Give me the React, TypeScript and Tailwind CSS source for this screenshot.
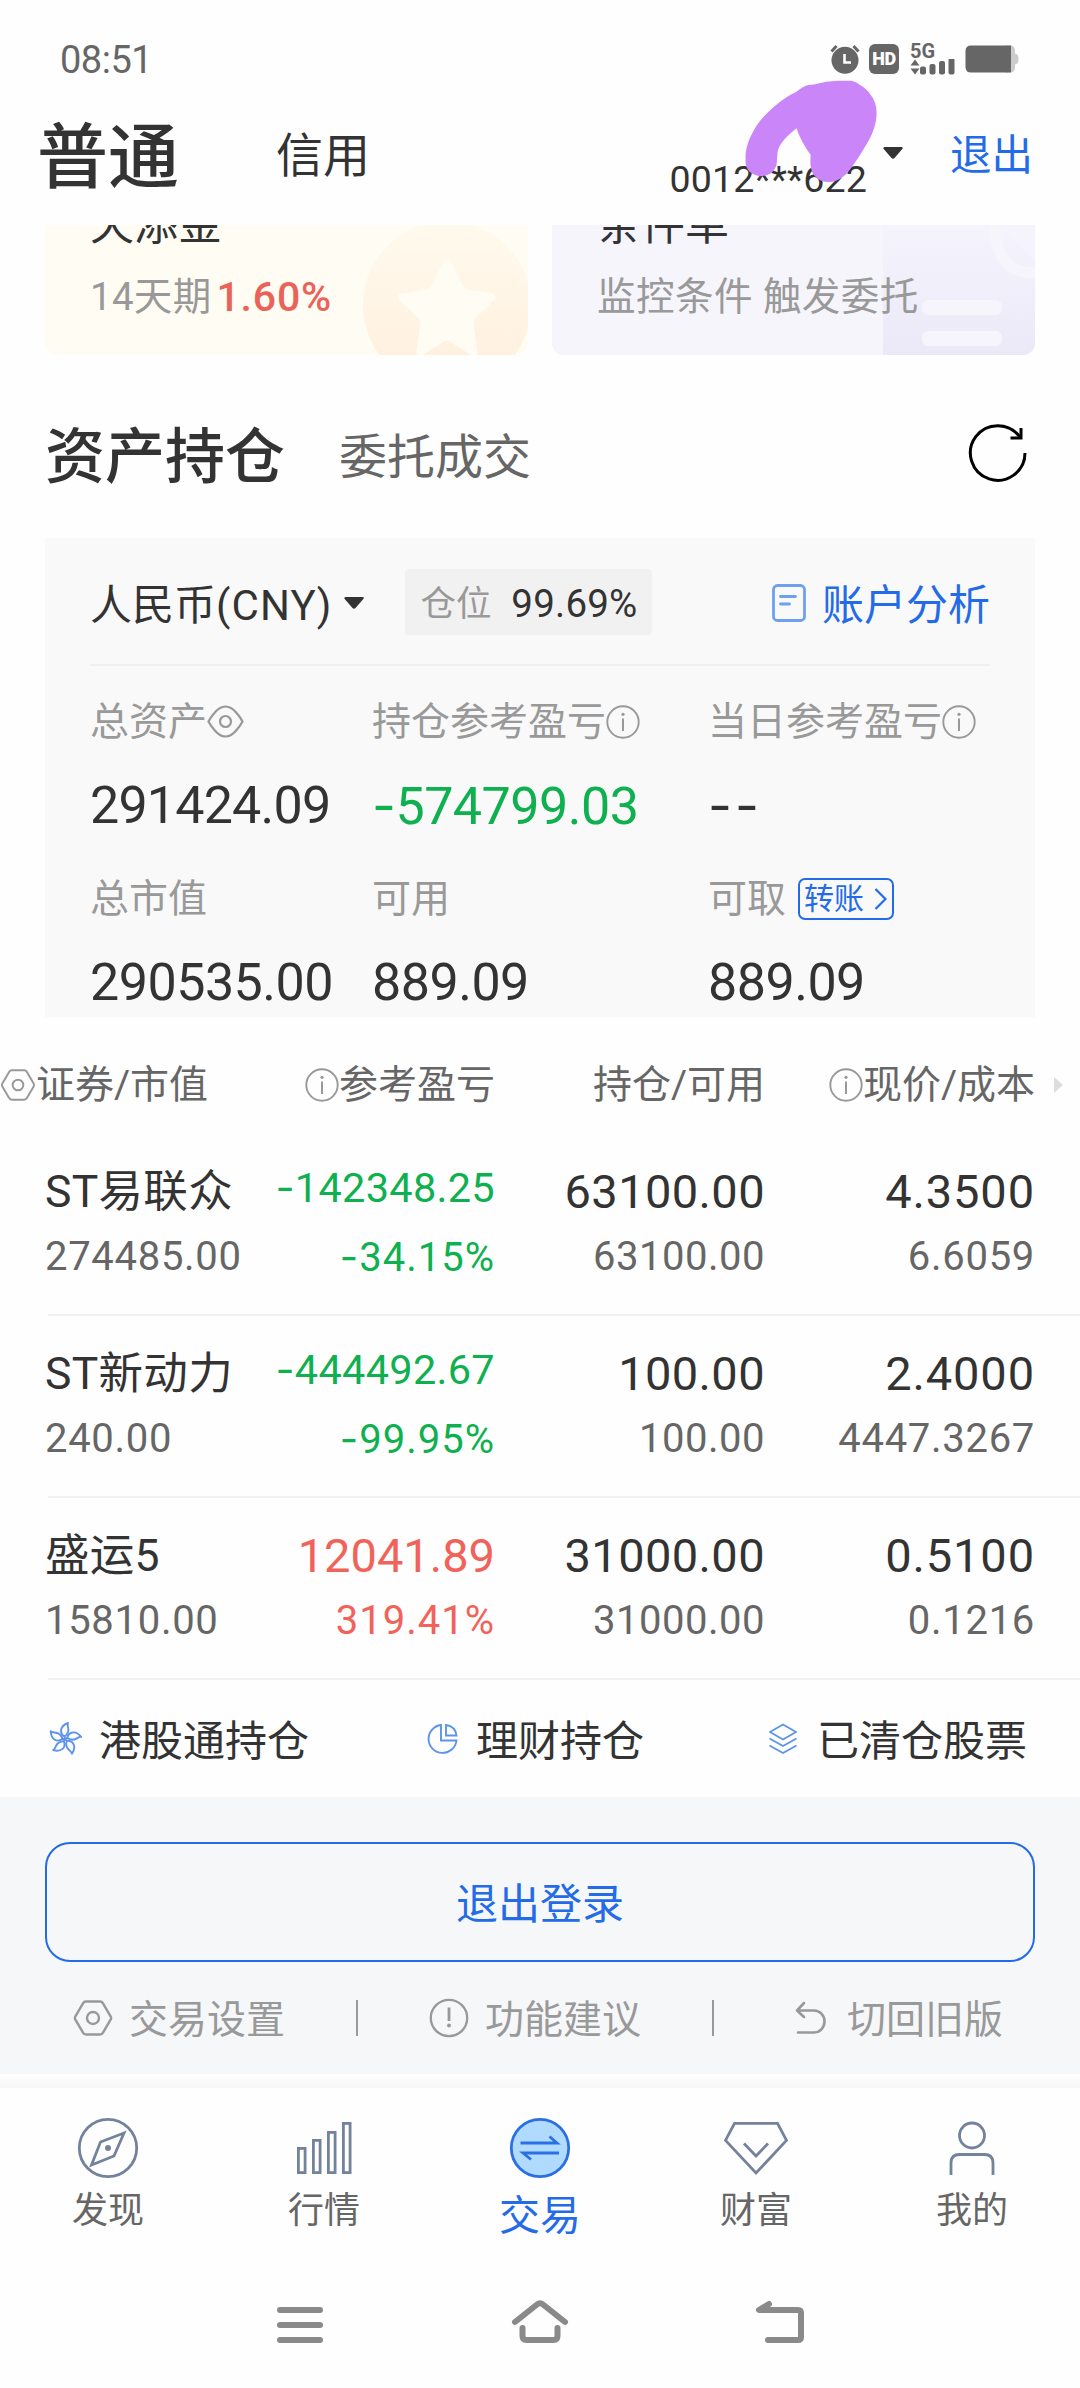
import type { ReactNode } from "react";

function Caret({ className = "" }: { className?: string }) {
  return (
    <svg className={className} width="20" height="12" viewBox="0 0 20 12">
      <path d="M1.500 0h17q2 .4.8 2L11.500 11q-1.500 1.300-3 0L.7 2Q-.3.5 1.500 0z" fill="#333" />
    </svg>
  );
}

function Info() {
  return (
    <svg className="shrink-0" width="34" height="34" viewBox="0 0 34 34" fill="none" stroke="#999">
      <circle cx="17" cy="17" r="15.700" strokeWidth="1.900" />
      <path d="M17 13.500V26" strokeWidth="2" />
      <circle cx="17" cy="9.300" r="1.600" fill="#999" stroke="none" />
    </svg>
  );
}

function Hex({ w, h, s }: { w: number; h: number; s: number }) {
  return (
    <svg className="shrink-0" width={w} height={h} viewBox="0 0 40 36" fill="none" stroke="#999" strokeWidth={s}>
      <path d="M13 1.500h14q2 0 3 1.800l7.600 13q1 1.700 0 3.400l-7.600 13q-1 1.800-3 1.800H13q-2 0-3-1.800l-7.600-13q-1-1.700 0-3.400l7.600-13q1-1.800 3-1.800z" />
      <circle cx="20" cy="18" r="6" />
    </svg>
  );
}

// Leading minus signs use Inter, whose hyphen is wide and sits at digit centre.
function Num({ text }: { text: string }) {
  const digits = text.replace(/^-+/, "");
  const sign = text.slice(0, text.length - digits.length);
  return (
    <>
      {sign && <span className="font-['Inter']">{sign}</span>}
      {digits}
    </>
  );
}

function StatusBar() {
  return (
    <div className="flex h-[118px] items-center justify-between pl-[60px] pr-[61px] text-[#666]">
      <span className="mt-[2px] text-[38px] leading-[38px] tracking-[-0.500px]">08:51</span>
      <div className="flex items-center">
        <svg width="30" height="30" viewBox="0 0 30 30">
          <circle cx="15" cy="16.300" r="13.500" fill="#666" />
          <path d="M1.500 7.500 6.500 2M28.500 7.500 23.500 2" stroke="#666" strokeWidth="3" />
          <path d="M14.500 10v8.500H21" stroke="#fff" strokeWidth="2.600" fill="none" />
        </svg>
        <div className="ml-[9px] flex h-[30px] w-[30px] items-center justify-center rounded-[6px] bg-[#666] text-[18px] font-black leading-none tracking-[-0.500px] text-white">HD</div>
        <div className="ml-[11px] flex h-[31px] w-[46px] flex-col">
          <span className="text-[20px] font-bold leading-[15px]">5G</span>
          <svg width="46" height="16" viewBox="0 0 46 16" fill="#666">
            <path d="M.5 6.500 5 .5l4.500 6zM.5 9.500h9L5 15.500z" />
            <rect x="10" y="7.500" width="6" height="8" rx="2" />
            <rect x="19.500" y="5" width="6" height="10.500" rx="2" />
            <rect x="29" y="2" width="6" height="13.500" rx="2" />
            <rect x="38.500" y="-1" width="6" height="16.500" rx="2" />
          </svg>
        </div>
        <svg className="ml-[9px]" width="54" height="28" viewBox="0 0 54 28">
          <path d="M40 .5h5q5 0 5 5v3q3.500.5 3.500 5.500T50 19.500v3q0 5-5 5h-5z" fill="#ccc" />
          <path d="M6 .5h40v27H6q-5.500 0-5.500-5.500V6Q.5.5 6 .5z" fill="#666" />
        </svg>
      </div>
    </div>
  );
}

function Header() {
  return (
    <div className="mb-[33px] flex h-[74px] pl-[37px] pr-[47px] text-[#333]">
      <span className="mt-[5px] text-[71px] font-medium leading-[70px]">普通</span>
      <span className="ml-[97px] mt-[15px] text-[47px] leading-[46px]">信用</span>
      <div className="relative ml-auto flex h-full items-end">
        <span className="text-[37.500px] leading-[25px] tracking-[0.150px]">0012***622</span>
        <svg className="absolute left-[70px] top-[-42px]" width="140" height="110" viewBox="740 76 140 110">
          <path
            d="M745.600 160C745 150 748 139 757 125Q764 115 774 106.700 785 97 796.500 91.700 803 86 808.600 85 L814 84.500 Q826 81 838 80.700 H851.600 Q857 82 860 85 867 89 870 94 877 102 876.600 115 876 127 869 140 861 154 854 164 848 173 843 176.700 836 182 829.300 182 820 182 815.500 176.700 809 171 810.700 155 801 142 796.500 128.300 778 143 777.500 153 L776.600 165Q774 171 770.700 173.300 765 177 758.700 176 751 174 748 170 745 166 745.600 160z"
            fill="#ca86f9"
          />
        </svg>
      </div>
      <Caret className="ml-[16px] mt-[29px]" />
      <span className="ml-[47px] mt-[17px] text-[41.500px] leading-[42px] text-[#246be8]">退出</span>
    </div>
  );
}

function PromoCards() {
  return (
    <div className="flex h-[130px] justify-between px-[45px]">
      <div className="relative h-full w-[483px] overflow-hidden rounded-b-[12px] bg-[#fffcf4] pl-[45px]">
        <svg className="absolute right-0 top-0" width="168" height="130" viewBox="0 0 168 130">
          <defs>
            <linearGradient id="coin" x1="0" y1="0" x2="0" y2="1">
              <stop offset="0" stopColor="#fffaee" />
              <stop offset=".8" stopColor="#fff1e0" />
            </linearGradient>
          </defs>
          <circle cx="87" cy="80" r="84" fill="url(#coin)" />
          <path d="M83 37q4-6 8 0l12 24q2 3 5 3.500l24 4q6 2 2 7l-19 18q-2 3-1.500 6l4 27q0 6-6 4L89 116q-2-1-4 0l-23 14.500q-6 1-5.500-5l3.500-26q.5-4-1.500-6L39.500 75.500q-4-5 2-7l24-4q3-.5 5-3.500z" fill="#fffcf4" />
        </svg>
        <div className="relative mt-[-22px] text-[44px] leading-[44px] text-[#333]">天添金</div>
        <div className="relative mt-[30px] flex items-center leading-[40px]">
          <span className="text-[38.500px] tracking-[0.300px] text-[#999]">14天期</span>
          <span className="ml-[5px] text-[41px] font-medium tracking-[0.800px] text-[#ea6359]">1.60%</span>
        </div>
      </div>
      <div className="relative h-full w-[483px] overflow-hidden rounded-b-[12px] bg-[#f6f5fc] pl-[45px]">
        <svg className="absolute right-0 top-0" width="152" height="130" viewBox="0 0 152 130">
          <defs>
            <linearGradient id="doc" x1="0" y1="0" x2="0" y2="1">
              <stop offset="0" stopColor="#f5f4fc" />
              <stop offset="1" stopColor="#ebe9f8" />
            </linearGradient>
          </defs>
          <rect width="152" height="130" fill="url(#doc)" />
          <path d="M112 0q0 48 40 48" fill="none" stroke="#f6f5fc" strokeWidth="11" />
          <path d="M120 0q16 22 32 34V0z" fill="#f5f4fc" />
          <rect x="39" y="75" width="80" height="15" rx="6" fill="#f6f5fc" />
          <rect x="39" y="106" width="80" height="15" rx="6" fill="#f6f5fc" />
        </svg>
        <div className="relative mt-[-22px] text-[44px] leading-[44px] text-[#333]">条件单</div>
        <div className="relative mt-[30px] text-[38.600px] leading-[40px] tracking-[0.400px] text-[#999]">监控条件&nbsp;触发委托</div>
      </div>
    </div>
  );
}

function SectionTabs() {
  return (
    <div className="flex h-[183px] items-center pl-[45px] pr-[52px] pt-[22px]">
      <span className="text-[60px] font-medium leading-[60px] text-[#333]">资产持仓</span>
      <span className="ml-[54px] text-[48px] leading-[60px] text-[#666]">委托成交</span>
      <svg className="mb-[9px] ml-auto" width="60" height="60" viewBox="0 0 60 60" fill="none" stroke="#000" strokeWidth="3">
        <path d="M57 30A27.300 27.300 0 1 1 52 14.200" />
        <path d="M53 5v10H42.500" />
      </svg>
    </div>
  );
}

function Metric({ label, children, value, cls }: { label: string; children?: ReactNode; value: string; cls?: string }) {
  return (
    <div>
      <div className="flex h-[40px] items-center whitespace-nowrap text-[39px] leading-[40px] text-[#999]">
        {label}
        {children}
      </div>
      <div className={"mt-[38px] h-[52px] text-[52px] leading-[52px] " + (cls ?? "tracking-[-0.500px] text-[#333]")}>
        <Num text={value} />
      </div>
    </div>
  );
}

function AssetCard() {
  return (
    <div className="mx-[45px] h-[479px] bg-[#f9f9f9] px-[45px]">
      <div className="flex h-[128px] items-center border-b-2 border-[#f0f0f0] pt-[8px]">
        <span className="mt-[2px] text-[42px] leading-[42px] text-[#333]">
          人民币<span className="tracking-[1.100px]">(CNY)</span>
        </span>
        <Caret className="ml-[12px] mt-[-4px]" />
        <div className="mb-[6px] ml-[41px] flex h-[66px] w-[247px] items-center justify-between rounded-[4px] bg-[#f1f1f1] px-[15px] pt-[4px]">
          <span className="text-[35.500px] leading-[40px] text-[#999]">仓位</span>
          <span className="text-[38.500px] leading-[40px] tracking-[0.200px] text-[#333]">99.69%</span>
        </div>
        <svg className="mb-[4px] ml-auto" width="34" height="38" viewBox="0 0 34 38" fill="none" stroke="#6fa0f0" strokeWidth="2.800" strokeLinecap="round">
          <rect x="1.500" y="1.500" width="31" height="35" rx="4" />
          <path d="M8.500 12.500h15M8.500 20h9" />
        </svg>
        <span className="ml-[16px] mt-[2px] text-[42px] leading-[42px] text-[#246be8]">账户分析</span>
      </div>
      <div className="grid grid-cols-[282px_336px_1fr] gap-y-[47px] pt-[36px]">
        <Metric label="总资产" value="291424.09" cls="tracking-[-0.800px] text-[#333]">
          <svg className="mb-[2px]" width="37" height="33" viewBox="0 0 37 33" fill="none" stroke="#999" strokeWidth="2.200">
            <path d="M1.500 16.500Q3.500 12.500 7 8.500 12.500 1.500 18.500 1.500T30 8.500Q33.500 12.500 35.500 16.500 33.500 20.500 30 24.500 24.500 31.500 18.500 31.500T7 24.500Q3.500 20.500 1.500 16.500z" />
            <circle cx="18.500" cy="16.500" r="5.500" />
          </svg>
        </Metric>
        <Metric label="持仓参考盈亏" value="-574799.03" cls="tracking-[-0.500px] text-[#0eb04f]">
          <Info />
        </Metric>
        <Metric label="当日参考盈亏" value="--" cls="text-[#333] tracking-[3px]">
          <Info />
        </Metric>
        <Metric label="总市值" value="290535.00" />
        <Metric label="可用" value="889.09" />
        <Metric label="可取" value="889.09">
          <div className="ml-[12px] flex h-[42px] w-[96px] items-center rounded-[7px] border-2 border-[#246be8] pl-[4px] text-[30px] leading-[38px] text-[#246be8]">
            转账
            <svg className="ml-[10px]" width="13" height="22" viewBox="0 0 13 22" fill="none" stroke="#246be8" strokeWidth="2.200">
              <path d="M1.500 1 11.500 11 1.500 21" />
            </svg>
          </div>
        </Metric>
      </div>
    </div>
  );
}

type Holding = {
  name: string;
  value: string;
  profit: string;
  rate: string;
  held: string;
  free: string;
  price: string;
  cost: string;
  tone: string;
  profitSize: string;
};

const GREEN = "text-[#0eb04f]";
const RED = "text-[#f1635a]";
const SMALL_PROFIT = "text-[41.500px] leading-[38px] tracking-[0.300px]";
const LARGE_PROFIT = "text-[47px] leading-[48px]";

const holdings: Holding[] = [
  { name: "ST易联众", value: "274485.00", profit: "-142348.25", rate: "-34.15%", held: "63100.00", free: "63100.00", price: "4.3500", cost: "6.6059", tone: GREEN, profitSize: SMALL_PROFIT },
  { name: "ST新动力", value: "240.00", profit: "-444492.67", rate: "-99.95%", held: "100.00", free: "100.00", price: "2.4000", cost: "4447.3267", tone: GREEN, profitSize: SMALL_PROFIT },
  { name: "盛运5", value: "15810.00", profit: "12041.89", rate: "319.41%", held: "31000.00", free: "31000.00", price: "0.5100", cost: "0.1216", tone: RED, profitSize: LARGE_PROFIT },
];

function Holdings() {
  return (
    <div>
      <div className="grid h-[117px] grid-cols-[270px_225px_270px_270px_1fr] items-center pt-[18px] text-[39px] leading-[40px] text-[#666]">
        <div className="flex items-center">
          <Hex w={36} h={32} s={2.2} />
          证券/市值
        </div>
        <div className="flex items-center justify-end">
          <Info />
          参考盈亏
        </div>
        <div className="text-right">持仓/可用</div>
        <div className="flex items-center justify-end">
          <Info />
          现价/成本
        </div>
        <svg className="ml-[19px]" width="9" height="16" viewBox="0 0 9 16">
          <path d="M0 0l9 8-9 8z" fill="#ddd" />
        </svg>
      </div>
      {holdings.map((h) => (
        <div key={h.name} className="h-[182px]">
          <div className="grid h-[180px] grid-cols-[225px_225px_270px_270px] px-[45px] pt-[34px] text-right text-[#333]">
            <div className="whitespace-nowrap text-left">
              <div className="h-[48px] text-[44.500px] leading-[48px] tracking-[0.300px]">{h.name}</div>
              <div className="mt-[21px] text-[40px] leading-[40px] tracking-[0.700px] text-[#666]">{h.value}</div>
            </div>
            <div className={h.tone}>
              <div className={"h-[48px] " + h.profitSize}>
                <Num text={h.profit} />
              </div>
              <div className="mt-[21px] text-[40px] leading-[40px] tracking-[1px]">
                <Num text={h.rate} />
              </div>
            </div>
            <div>
              <div className="h-[48px] text-[47px] leading-[48px] tracking-[0.400px]">{h.held}</div>
              <div className="mt-[21px] text-[40px] leading-[40px] tracking-[0.500px] text-[#666]">{h.free}</div>
            </div>
            <div>
              <div className="h-[48px] text-[47px] leading-[48px] tracking-[0.900px]">{h.price}</div>
              <div className="mt-[21px] text-[40px] leading-[40px] tracking-[0.700px] text-[#666]">{h.cost}</div>
            </div>
          </div>
          <div className="ml-[48px] h-[2px] bg-[#f1f1f1]" />
        </div>
      ))}
    </div>
  );
}

function QuickLinks() {
  const petals = [0, 72, 144, 216, 288];
  return (
    <div className="flex h-[117px] items-center pl-[49px] pt-[6px] text-[42px] leading-[42px] text-[#333]">
      <svg className="mb-[6px]" width="33" height="33" viewBox="0 0 33 33" fill="none" stroke="#5d94ea" strokeWidth="1.900" strokeLinejoin="round">
        {petals.map((a) => (
          <path key={a} transform={`rotate(${a} 16 17)`} d="M15.500 14.500C10 11 11 4 19 1 17.500 4 20.500 6 19 10Q18 13 15.500 14.500L16 17" />
        ))}
      </svg>
      <span className="ml-[17px]">港股通持仓</span>
      <svg className="mb-[6px] ml-[118px]" width="32" height="32" viewBox="0 0 32 32" fill="none" stroke="#5d94ea" strokeWidth="1.900">
        <path d="M14 2A14 14 0 1 0 29.500 17.500H14z" />
        <path d="M19 2v10.500h10.500Q28.500 3.500 19 2z" />
      </svg>
      <span className="ml-[17px]">理财持仓</span>
      <svg className="mb-[6px] ml-[125px]" width="28" height="32" viewBox="0 0 28 32" fill="none" stroke="#5d94ea" strokeWidth="1.900" strokeLinejoin="round">
        <path d="M14 1.500 27 9 14 16.500 1 9z" />
        <path d="M.5 15.500 14 23l13.500-7.500M.5 22.500 14 30l13.500-7.500" />
      </svg>
      <span className="ml-[20px]">已清仓股票</span>
    </div>
  );
}

function FooterActions() {
  return (
    <div className="h-[277px] bg-[#f6f7f9] px-[45px] pt-[45px]">
      <div className="flex h-[120px] items-center justify-center rounded-[25px] border-2 border-[#246be8] pt-[5px] text-[42px] leading-[42px] text-[#246be8]">
        退出登录
      </div>
      <div className="flex h-[112px] items-center pl-[28px] text-[39px] leading-[40px] text-[#999]">
        <Hex w={40} h={36} s={2.4} />
        <span className="ml-[16px] mt-[3px]">交易设置</span>
        <div className="ml-[71px] h-[36px] w-[2px] bg-[#999]" />
        <svg className="ml-[71px]" width="40" height="40" viewBox="0 0 40 40" fill="none" stroke="#999">
          <circle cx="20" cy="20" r="18.200" strokeWidth="2.300" />
          <path d="M20 9.500V23" strokeWidth="2.800" />
          <circle cx="20" cy="27.500" r="2" fill="#999" stroke="none" />
        </svg>
        <span className="ml-[16px] mt-[3px]">功能建议</span>
        <div className="ml-[71px] h-[36px] w-[2px] bg-[#999]" />
        <svg className="ml-[81px]" width="32" height="34" viewBox="0 0 32 34" fill="none" stroke="#999" strokeWidth="2.600" strokeLinecap="round" strokeLinejoin="round">
          <path d="M9 2 2 9.500 9 16M2 9.500h17A10.500 11 0 0 1 19 31.500H3" />
        </svg>
        <span className="ml-[20px] mt-[3px]">切回旧版</span>
      </div>
    </div>
  );
}

function NavItem({ label, active, children }: { label: string; active?: boolean; children: ReactNode }) {
  return (
    <div className="flex w-[216px] flex-col items-center">
      <svg width="64" height="62" viewBox="0 0 64 62" fill="none" stroke="#73839b" strokeWidth="2.800">
        {children}
      </svg>
      <span className={active ? "mt-[16px] text-[41px] leading-[42px] text-[#246be8]" : "mt-[14px] text-[36px] leading-[37px] text-[#666]"}>{label}</span>
    </div>
  );
}

function BottomNav() {
  return (
    <div>
      <div className="h-[14px] bg-linear-to-b from-white to-[#f6f6f6]" />
      <div className="flex h-[174px] pt-[29px]">
        <NavItem label="发现">
          <circle cx="32" cy="31" r="28.700" />
          <path d="M48 16 24.500 25 15.500 48 38 39z" />
          <circle cx="32" cy="31" r="3" fill="#73839b" stroke="none" />
        </NavItem>
        <NavItem label="行情">
          <rect x="6.400" y="31.400" width="6.700" height="24.200" />
          <rect x="21.400" y="23.400" width="6.700" height="32.200" />
          <rect x="36.400" y="15.400" width="6.700" height="40.200" />
          <rect x="51.400" y="6.400" width="6.700" height="49.200" />
        </NavItem>
        <NavItem label="交易" active>
          <circle cx="32" cy="31" r="28.700" fill="#b0dbff" stroke="#2a70e4" />
          <path d="M12.500 26H49l-7.500-6.500M51 36H15l8 6.500" stroke="#2a70e4" />
        </NavItem>
        <NavItem label="财富">
          <path d="M10.500 6.400h43l9 17L32 56 1.500 23.400z" />
          <path d="M20 26.500 32 39l12-12.500" />
        </NavItem>
        <NavItem label="我的">
          <circle cx="32" cy="18.500" r="12.500" />
          <path d="M11 58V46q0-8.500 8.500-8.500h25q8.500 0 8.500 8.500v12" />
        </NavItem>
      </div>
    </div>
  );
}

function SystemNav() {
  return (
    <div className="flex h-[126px] items-center justify-center gap-[180px]">
      <svg width="60" height="50" viewBox="0 0 60 50" fill="none" stroke="#8a8a8a" strokeWidth="6" strokeLinecap="round">
        <path d="M10 10h40M10 25h40M10 40h40" />
      </svg>
      <svg width="60" height="50" viewBox="0 0 60 50" fill="none" stroke="#8a8a8a" strokeWidth="6" strokeLinecap="round" strokeLinejoin="round">
        <path d="M5 22 27 4.500q3-2.500 6 0L55 22M12.500 28v8q0 4 4 4h27q4 0 4-4v-8" />
      </svg>
      <svg width="60" height="50" viewBox="0 0 60 50" fill="none" stroke="#8a8a8a" strokeWidth="6" strokeLinecap="round" strokeLinejoin="round">
        <path d="M19 4 9 10h39q3 0 3 3v24q0 3-3 3H18" />
      </svg>
    </div>
  );
}

export default function App() {
  return (
    <div className="h-[2388px] w-[1080px] overflow-hidden whitespace-nowrap bg-[#fefefe] font-['Roboto','Noto_Sans_CJK_SC',sans-serif]">
      <StatusBar />
      <Header />
      <PromoCards />
      <SectionTabs />
      <AssetCard />
      <Holdings />
      <QuickLinks />
      <FooterActions />
      <BottomNav />
      <SystemNav />
    </div>
  );
}
